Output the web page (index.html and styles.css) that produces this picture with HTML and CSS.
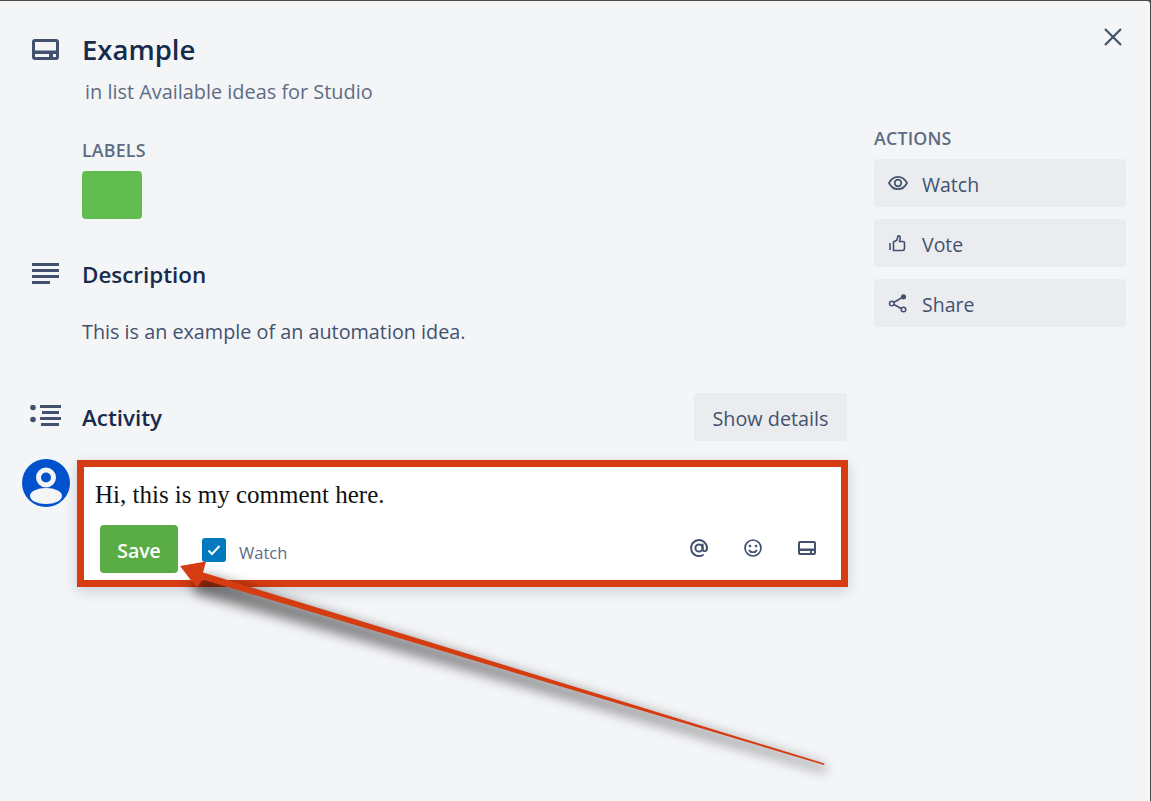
FILE: index.html
```html
<!DOCTYPE html>
<html lang="en">
<head>
<meta charset="utf-8">
<title>Example</title>
<link rel="stylesheet" href="styles.css">
</head>
<body>
<div class="modal">
  <main class="main">
    <header class="section head">
      <svg class="gutter-icon card-icon" viewBox="0 0 27 21"><path fill-rule="evenodd" d="M3 0h21a3 3 0 0 1 3 3v15a3 3 0 0 1-3 3H3a3 3 0 0 1-3-3V3a3 3 0 0 1 3-3zM3 3v8.500h21V3zM3 15v3h14v-3zM21 15v3h3v-3z"/></svg>
      <div>
        <h1 class="title">Example</h1>
        <p class="subtitle">in list Available ideas for Studio</p>
      </div>
    </header>
    <section class="labels">
      <h3 class="caps">LABELS</h3>
      <div class="label-chip"></div>
    </section>
    <section class="section desc-head">
      <svg class="gutter-icon desc-icon" viewBox="0 0 27 21"><path d="M0 0h27v3H0zM0 6h27v3H0zM0 12h27v3H0zM0 18h18v3H0z"/></svg>
      <h2 class="h2">Description</h2>
    </section>
    <p class="desc-text">This is an example of an automation idea.</p>
    <section class="section activity-head">
      <svg class="gutter-icon act-icon" viewBox="0 0 31 21"><circle cx="3" cy="2.500" r="2.800"/><circle cx="3" cy="14.500" r="2.800"/><path d="M10 0h21v3H10zM12 6h17v3H12zM10 12h21v3H10zM11 18h18v3H11z"/></svg>
      <h2 class="h2 grow activity-title">Activity</h2>
      <button class="btn details">Show details</button>
    </section>
    <section class="composer">
      <svg class="avatar" viewBox="0 0 48 48"><circle cx="24" cy="24" r="24" fill="#0052cc"/><circle cx="24" cy="18.500" r="7.500" fill="none" stroke="#f4f5f7" stroke-width="5"/><ellipse cx="24" cy="37" rx="16" ry="8" fill="#f4f5f7"/></svg>
      <div class="comment-box">
        <div class="comment-text">Hi, this is my comment here.</div>
        <div class="comment-bar">
          <button class="save">Save</button>
          <span class="check"><svg viewBox="0 0 24 24" class="check-mark"><path d="M6.500 12.500l3.500 3.500 7.500-8" fill="none" stroke="#fff" stroke-width="2"/></svg></span>
          <span class="watch-label">Watch</span>
          <span class="bar-icons">
            <svg class="bar-icon" viewBox="0 0 20 20"><circle cx="10" cy="10" r="3.600" fill="none" stroke="#42526e" stroke-width="2"/><path d="M13.600 6.500v4.500c0 3 4.400 3 4.400-1a8 8 0 1 0-4 7" fill="none" stroke="#42526e" stroke-width="2" stroke-linecap="round"/></svg>
            <svg class="bar-icon" viewBox="0 0 20 20"><circle cx="10" cy="10" r="8" fill="none" stroke="#42526e" stroke-width="1.700"/><circle cx="7" cy="8" r="1.300" fill="#42526e"/><circle cx="13" cy="8" r="1.300" fill="#42526e"/><path d="M6 12c1.500 3 6.500 3 8 0" fill="none" stroke="#42526e" stroke-width="1.700"/></svg>
            <svg class="bar-icon" viewBox="0 0 20 20"><path fill="#42526e" fill-rule="evenodd" d="M3 3h14a2 2 0 0 1 2 2v10a2 2 0 0 1-2 2H3a2 2 0 0 1-2-2V5a2 2 0 0 1 2-2zM3 5v5.500h14V5zM3 13v2h10v-2zM15 13v2h2v-2z"/></svg>
          </span>
        </div>
      </div>
    </section>
  </main>
  <aside class="side">
    <button class="close" aria-label="Close"><svg viewBox="0 0 20 20"><path d="M2 2l16 16M18 2L2 18" fill="none" stroke="#42526e" stroke-width="2.200"/></svg></button>
    <h3 class="caps actions">ACTIONS</h3>
    <button class="btn action"><svg class="act-svg" viewBox="0 0 20 20"><path d="M10 3.800c4.300 0 7.500 3.200 9 6.200-1.500 3-4.700 6.200-9 6.200S2.500 13 1 10c1.500-3 4.700-6.200 9-6.200z" fill="none" stroke="#42526e" stroke-width="1.700" transform="translate(0 -1)"/><circle cx="10" cy="9" r="3.300" fill="none" stroke="#42526e" stroke-width="1.700"/></svg>Watch</button>
    <button class="btn action"><svg class="act-svg" viewBox="0 0 20 20"><path d="M2 9v7" stroke="#42526e" stroke-width="1.600" fill="none"/><path d="M5.500 8l3.500-2 1-4c2-.5 2.800 1 2 3.500l-.5 2h3.500c1 0 1.500.700 1.500 1.500v5c0 1.500-.700 2.500-2 2.500H5.500z" fill="none" stroke="#42526e" stroke-width="1.600"/></svg>Vote</button>
    <button class="btn action"><svg class="act-svg" viewBox="0 0 20 20"><path d="M15 3L4 9.500l11 6" fill="none" stroke="#42526e" stroke-width="1.600"/><circle cx="15.500" cy="2.800" r="2.600" fill="#42526e"/><circle cx="3.800" cy="9.500" r="2.300" fill="#ebecf0" stroke="#42526e" stroke-width="1.500"/><circle cx="15.500" cy="15.500" r="2.300" fill="#ebecf0" stroke="#42526e" stroke-width="1.500"/></svg>Share</button>
  </aside>
  <svg class="arrow" viewBox="0 0 1151 801">
    <defs>
      <linearGradient id="shade" gradientUnits="userSpaceOnUse" x1="190" y1="585" x2="826" y2="770">
        <stop offset="0" stop-color="#000" stop-opacity=".5"/>
        <stop offset="1" stop-color="#000" stop-opacity=".3"/>
      </linearGradient>
    </defs>
    <polygon class="arrow-shadow" fill="url(#shade)" points="190,583 206,575 826,765 826,773 196,594"/>
    <polygon points="180,566 206,561.500 203,572.500 824.500,763.500 824,765 202.500,579.500 197,588" fill="#d63c12"/>
  </svg>
</div>
</body>
</html>
```
FILE: styles.css
```css
html, body { margin: 0; padding: 0; background: #4a4a4a; }
body { width: 1151px; height: 801px; overflow: hidden; font-family: "Open Sans", "Noto Sans", sans-serif; color: #172b4d; }
.modal { position: relative; box-sizing: border-box; width: 1150px; height: 800px; margin-top: 1px; background: #f4f5f7; border-top-right-radius: 3px; display: flex; }
.main { width: 847px; box-sizing: border-box; padding-top: 27px; display: flex; flex-direction: column; }
.section { display: flex; }
.gutter-icon { fill: #42526e; flex: none; }
.head { padding-left: 32px; }
.card-icon { width: 27px; height: 21px; margin: 11px 23px 0 0; }
.title { margin: 0; font-size: 27.500px; line-height: 44px; font-weight: 600; color: #172b4d; }
.subtitle { margin: 4px 0 0 3px; font-size: 19.900px; line-height: 32px; color: #5e6c84; }
.labels { padding-left: 82px; margin-top: 30px; }
.caps { margin: 0; font-size: 17.800px; letter-spacing: .2px; line-height: 24px; font-weight: 600; color: #5e6c84; }
.label-chip { width: 60px; height: 48px; margin-top: 9px; background: #61bd4f; border-radius: 4px; }
.desc-head { padding-left: 32px; margin-top: 36px; height: 40px; align-items: center; }
.desc-icon { width: 27px; height: 21px; margin: -4px 23px 0 0; }
.h2 { margin: 0; font-size: 22.400px; line-height: 40px; font-weight: 600; color: #172b4d; }
.activity-title { padding-top: 2px; }
.grow { flex: 1; }
.desc-text { margin: 21px 0 0 82px; font-size: 19.800px; line-height: 32px; color: #42526e; }
.activity-head { margin-top: 45px; padding-left: 30px; height: 48px; align-items: center; }
.act-icon { width: 31px; height: 21px; margin: -4px 21px 0 0; }
.btn { border: 0; background: #ebecf0; border-radius: 4px; font-family: inherit; font-size: 19.500px; color: #42526e; height: 48px; padding: 2px 0 0; }
.details { width: 153px; font-size: 19.800px; }
.composer { position: relative; margin-top: 19px; padding-left: 22px; display: flex; gap: 7px; align-items: flex-start; }
.avatar { width: 48px; height: 48px; flex: none; margin-top: -1px; }
.comment-box { width: 771px; height: 127px; box-sizing: border-box; border: 7px solid #d63c12; background: #fff; padding: 0 0 0 11px; margin-right: -1px; box-shadow: 0 4px 12px rgba(9,30,66,.18); }
.comment-text { font-family: "Liberation Serif", serif; font-size: 25px; line-height: 28px; color: #111; margin-top: 14px; }
.comment-bar { display: flex; align-items: center; margin-top: 16px; padding-left: 5px; height: 48px; }
.save { width: 78px; height: 48px; border: 0; border-radius: 4px; background: #5aac44; color: #fff; font-family: inherit; font-size: 19.500px; font-weight: 600; padding: 2px 0 0; }
.check { width: 24px; height: 24px; margin-left: 24px; margin-top: 1px; background: #0079bf; border-radius: 3px; display: flex; }
.check-mark { width: 24px; height: 24px; }
.watch-label { margin-left: 13px; margin-top: 7px; font-size: 16.500px; color: #5e6c84; }
.bar-icons { margin-left: auto; display: flex; gap: 34px; padding-right: 24px; margin-top: -2px; }
.bar-icon { width: 20px; height: 20px; }
.side { width: 252px; margin-left: 27px; display: flex; flex-direction: column; position: relative; padding-top: 125px; }
.close { position: absolute; right: 3px; top: 26px; width: 20px; height: 20px; padding: 0; border: 0; background: none; }
.close svg { display: block; width: 20px; height: 20px; }
.actions { margin-bottom: 9px; }
.action { display: flex; align-items: center; text-align: left; padding-left: 14px; margin-bottom: 12px; }
.act-svg { width: 20px; height: 20px; margin-right: 14px; flex: none; }
.arrow { position: absolute; left: 0; top: -1px; width: 1151px; height: 801px; pointer-events: none; }
.arrow-shadow { filter: blur(6px); }
```
